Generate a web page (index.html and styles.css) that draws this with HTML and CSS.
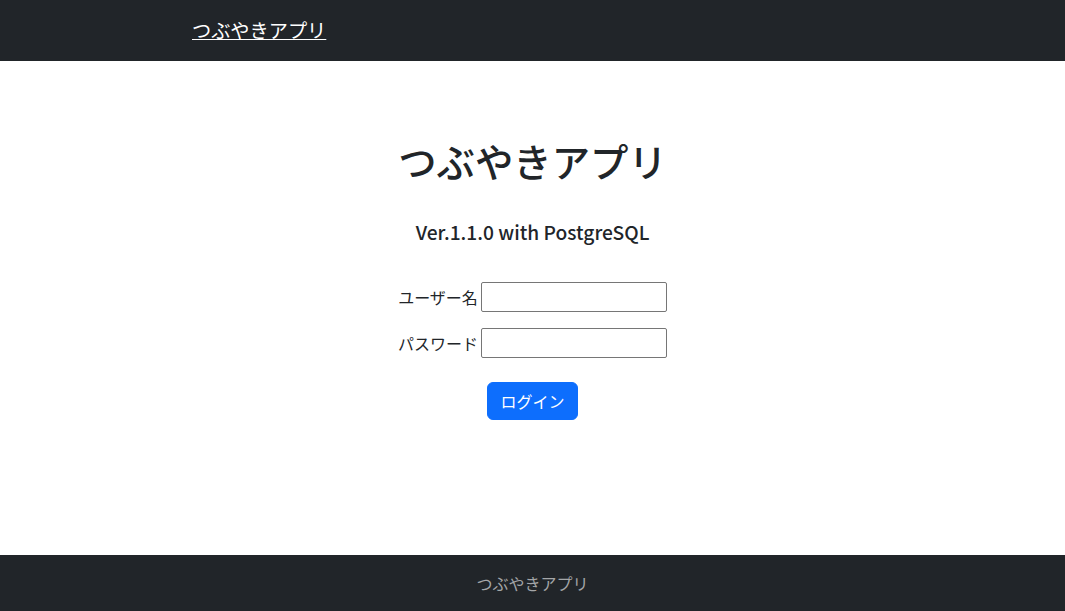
FILE: index.html
```html
<!DOCTYPE html>
<html lang="ja">
<head>
<meta charset="utf-8">
<title>つぶやきアプリ</title>
<link rel="stylesheet" href="styles.css">
</head>
<body>
<header class="navbar">
  <div class="nav-inner">
    <a class="brand" href="#">つぶやきアプリ</a>
  </div>
</header>
<main class="main">
  <h1 class="title">つぶやきアプリ</h1>
  <h5 class="subtitle">Ver.1.1.0 with PostgreSQL</h5>
  <form class="login">
    <div class="row"><label for="u">ユーザー名</label><input id="u" type="text"></div>
    <div class="row"><label for="p">パスワード</label><input id="p" type="password"></div>
    <button class="btn" type="button">ログイン</button>
  </form>
</main>
<footer class="footer">つぶやきアプリ</footer>
</body>
</html>
```
FILE: styles.css
```css
* { box-sizing: border-box; }
html, body { margin: 0; height: 100%; }
body {
  font-family: "Noto Sans CJK JP", "Noto Sans", sans-serif;
  color: #212529;
  font-size: 16px;
  line-height: 1.5;
  display: flex;
  flex-direction: column;
  background: #fff;
}
.navbar {
  background: #212529;
  height: 61px;
  display: flex;
  align-items: center;
  flex: none;
}
.nav-inner {
  padding-left: 192px;
}
.brand {
  color: #fff;
  font-size: 19.2px;
  line-height: 1.5;
  text-decoration: underline;
  text-underline-offset: 1px;
}
.main {
  flex: 1;
  display: flex;
  flex-direction: column;
  align-items: center;
}
.title {
  margin: 76px 0 0;
  font-size: 38.4px;
  font-weight: 500;
  line-height: 46px;
}
.subtitle {
  margin: 37px 0 0;
  font-size: 19.2px;
  font-weight: 500;
  line-height: 24px;
}
.login {
  margin-top: 38px;
  display: flex;
  flex-direction: column;
  align-items: center;
}
.row {
  display: flex;
  align-items: center;
  gap: 3px;
  margin-bottom: 16px;
}
.row label { font-size: 16px; line-height: 24px; }
.row input {
  width: 186px;
  height: 30px;
  border: 1px solid #767676;
  border-radius: 2px;
  font-size: 16px;
  padding: 2px 4px;
  font-family: inherit;
}
.btn {
  margin-top: 8px;
  background: #0d6efd;
  color: #fff;
  border: 1px solid #0d6efd;
  border-radius: 6px;
  font-family: inherit;
  font-size: 16px;
  line-height: 24px;
  padding: 6px 12px;
  width: 91px;
  height: 38px;
}
.footer {
  flex: none;
  height: 56px;
  background: #212529;
  color: #a4a6a8;
  text-align: center;
  line-height: 56px;
  font-size: 16px;
}
```
